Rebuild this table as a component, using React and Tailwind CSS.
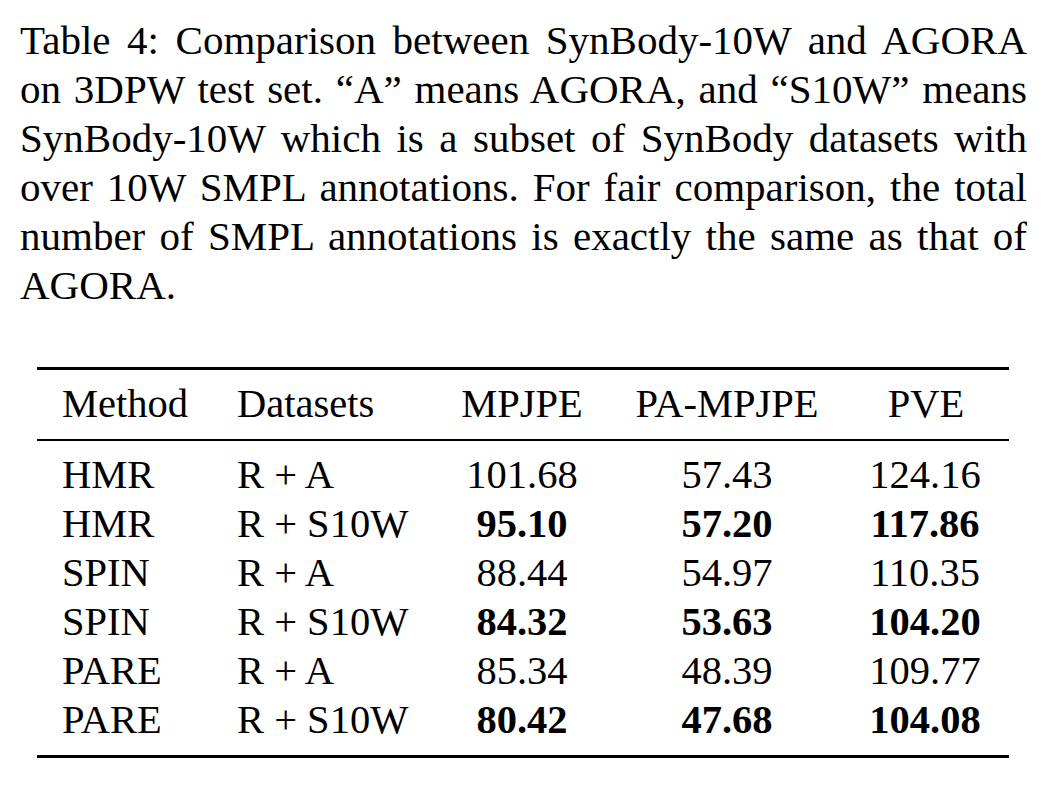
import React from 'react';

const captionLines = [
  'Table 4: Comparison between SynBody-10W and AGORA',
  'on 3DPW test set. “A” means AGORA, and “S10W” means',
  'SynBody-10W which is a subset of SynBody datasets with',
  'over 10W SMPL annotations. For fair comparison, the total',
  'number of SMPL annotations is exactly the same as that of',
];

const rows = [
  { method: 'HMR', data: 'R + A', mpjpe: '101.68', pa: '57.43', pve: '124.16', best: false },
  { method: 'HMR', data: 'R + S10W', mpjpe: '95.10', pa: '57.20', pve: '117.86', best: true },
  { method: 'SPIN', data: 'R + A', mpjpe: '88.44', pa: '54.97', pve: '110.35', best: false },
  { method: 'SPIN', data: 'R + S10W', mpjpe: '84.32', pa: '53.63', pve: '104.20', best: true },
  { method: 'PARE', data: 'R + A', mpjpe: '85.34', pa: '48.39', pve: '109.77', best: false },
  { method: 'PARE', data: 'R + S10W', mpjpe: '80.42', pa: '47.68', pve: '104.08', best: true },
];

const gridCols = 'grid grid-cols-[175px_221px_178px_232px_166px]';

const App = () => {
  return (
    <div
      className="bg-white w-[1056px] h-[790px] text-black text-[40.5px] leading-[49px]"
      style={{ fontFamily: '"Liberation Serif", "Times New Roman", serif' }}
    >
      {/* caption, line breaks kept as in the paper */}
      <div className="ml-[20px] w-[1007px] pt-[16px] text-[41px]">
        {captionLines.map((line, index) => (
          <div key={index} className="text-justify [text-align-last:justify] whitespace-nowrap">
            {line}
          </div>
        ))}
        <div>AGORA.</div>
      </div>

      <div className="ml-[37px] w-[972px] mt-[57px] border-t-[3px] border-b-[3px] border-black">
        <div className={`${gridCols} pt-[9px] pb-[11px] border-b-2 border-black`}>
          <div className="pl-[25px]">Method</div>
          <div className="pl-[25px]">Datasets</div>
          <div className="text-center">MPJPE</div>
          <div className="text-center">PA-MPJPE</div>
          <div className="text-center">PVE</div>
        </div>
        <div className="pt-[9px] pb-[11px]">
          {rows.map((row, index) => (
            <div key={index} className={gridCols}>
              <div className="pl-[25px] whitespace-nowrap">{row.method}</div>
              <div className="pl-[25px] whitespace-nowrap">{row.data}</div>
              <div className={`text-center ${row.best ? 'font-bold' : ''}`}>{row.mpjpe}</div>
              <div className={`text-center ${row.best ? 'font-bold' : ''}`}>{row.pa}</div>
              <div className={`text-center pr-[2px] ${row.best ? 'font-bold' : ''}`}>{row.pve}</div>
            </div>
          ))}
        </div>
      </div>
    </div>
  );
};

export default App;
